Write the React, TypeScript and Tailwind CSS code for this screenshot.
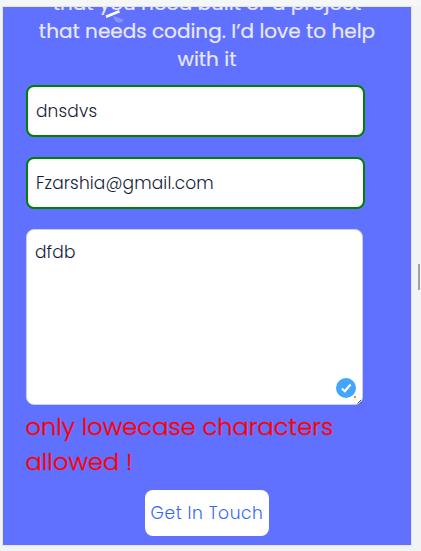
import React from 'react';

const field =
  'block h-[52px] w-[339px] rounded-[8px] border-2 border-[#008000] bg-white px-2 text-[17px] font-light tracking-[0.14px] text-[#151c38] outline-none';

export default function App() {
  return (
    <main className="relative h-[551px] w-[421px] overflow-hidden bg-[#f1f3f4] pl-[3px] pt-[7px] font-['Poppins','Inter',sans-serif] shadow-[inset_0_6px_0_#f5f7f6]">
      <section className="relative h-[538px] w-[408px] overflow-hidden bg-[#6070ff] shadow-[0_0_0_1px_#e3e5e5]">
        <div className="-mt-[18px] h-[84px] text-center text-[20px] leading-[28px] text-[#e8e9fc] [-webkit-text-stroke:0.2px_#e8e9fc]">
          <p className="whitespace-nowrap">that you need built or a project</p>
          <p className="whitespace-nowrap">that needs coding. I’d love to help</p>
          <p className="whitespace-nowrap">with it</p>
        </div>
        <svg className="absolute left-[101px] top-0 h-[18px] w-[24px]" viewBox="0 0 24 18" aria-hidden="true">
          <path d="M2 9.8 L15.5 4.2" stroke="#fff" strokeWidth="2.6" />
          <path d="M9.5 9 L19.5 12.5 C18.5 17.5 9.5 17 9.5 9Z" fill="#8793ff" />
        </svg>
        <form className="ml-[23px] mt-[12px]" onSubmit={(e) => e.preventDefault()}>
          <input className={field} defaultValue="dnsdvs" aria-label="Name" />
          <input className={`${field} mt-5`} defaultValue="Fzarshia@gmail.com" aria-label="Email" />
          <div className="relative mt-5 h-[176px] w-[337px]">
            <textarea
              className="block h-full w-full resize-none rounded-[8px] border border-[#c8cfe0] bg-white px-2 py-[8px] text-[17px] leading-[28px] font-light tracking-[0.14px] text-[#151c38] outline-none"
              defaultValue="dfdb"
              aria-label="Message"
            />
            <svg className="absolute left-[310px] top-[149px] h-[27px] w-[27px]" viewBox="0 0 27 27" aria-hidden="true">
              <circle cx="10" cy="10" r="10" fill="#42a5ff" />
              <path d="M5.8 10.5 L8.8 13.2 L14.6 6.5" fill="none" stroke="#fff" strokeWidth="2.2" />
              <rect x="18" y="18" width="2" height="2" fill="#f28b3c" />
              <path d="M21.5 25.5 L25 22 M24 25.5 L25.5 24" stroke="#55555c" strokeWidth="1" />
            </svg>
          </div>
          <div className="mt-[4px] -ml-[0.5px] text-[24px] leading-[35px] font-light tracking-[0.08px] text-[#ff0000] [-webkit-text-stroke:0.35px_#ff0000]">
            <p className="whitespace-nowrap">only lowecase characters</p>
            <p className="whitespace-nowrap">allowed !</p>
          </div>
          <button className="ml-[119px] mt-[11px] block h-[46px] w-[124px] whitespace-nowrap rounded-[8px] bg-white pt-[2px] text-[17px] font-light tracking-[0.6px] text-[#3467f3]">
            Get In Touch
          </button>
        </form>
      </section>
      <div className="absolute left-[418px] top-[264px] h-[26px] w-[2px] bg-[#a2a3a4]" />
    </main>
  );
}
